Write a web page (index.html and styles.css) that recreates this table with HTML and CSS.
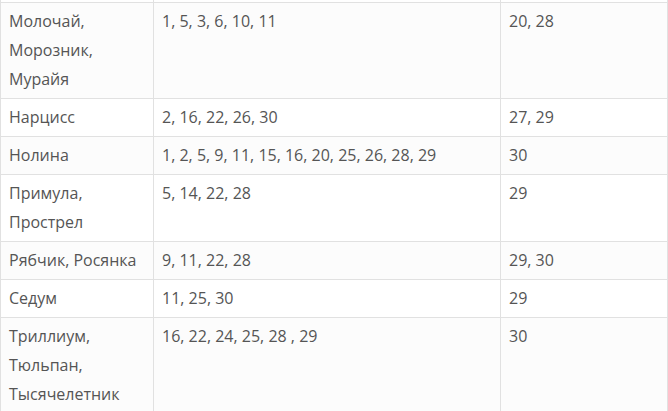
FILE: index.html
```html
<!DOCTYPE html>
<html lang="ru">
<head>
<meta charset="utf-8">
<link rel="stylesheet" href="styles.css">
</head>
<body>
<table class="dates">
  <colgroup>
    <col class="c-name">
    <col class="c-good">
    <col class="c-bad">
  </colgroup>
  <tbody>
    <tr class="cut"><td></td><td></td><td></td></tr>
    <tr><td>Молочай, Морозник, Мурайя</td><td>1, 5, 3, 6, 10, 11</td><td>20, 28</td></tr>
    <tr><td>Нарцисс</td><td>2, 16, 22, 26, 30</td><td>27, 29</td></tr>
    <tr><td>Нолина</td><td>1, 2, 5, 9, 11, 15, 16, 20, 25, 26, 28, 29</td><td>30</td></tr>
    <tr><td>Примула, Прострел</td><td>5, 14, 22, 28</td><td>29</td></tr>
    <tr><td>Рябчик, Росянка</td><td>9, 11, 22, 28</td><td>29, 30</td></tr>
    <tr><td>Седум</td><td>11, 25, 30</td><td>29</td></tr>
    <tr><td>Триллиум, Тюльпан, Тысячелетник</td><td>16, 22, 24, 25, 28 , 29</td><td>30</td></tr>
  </tbody>
</table>
</body>
</html>
```

FILE: styles.css
```css
html, body {
  margin: 0;
  padding: 0;
  background: #ffffff;
}

.dates {
  border-collapse: collapse;
  table-layout: fixed;
  width: 667px;
  font-family: "Open Sans", "Liberation Sans", sans-serif;
  font-size: 16px;
  line-height: 29px;
  color: #555555;
}

.c-name { width: 153px; }
.c-good { width: 347px; }
.c-bad { width: 167px; }

.dates td {
  border: 1px solid #e1e1e1;
  padding: 4px 8px;
  vertical-align: top;
  text-align: left;
}

.dates tr:nth-child(even) td {
  background: #fcfcfc;
}

.dates tr.cut td {
  border-top: 0;
  padding: 0;
  height: 2px;
  line-height: 0;
  font-size: 0;
}
```
